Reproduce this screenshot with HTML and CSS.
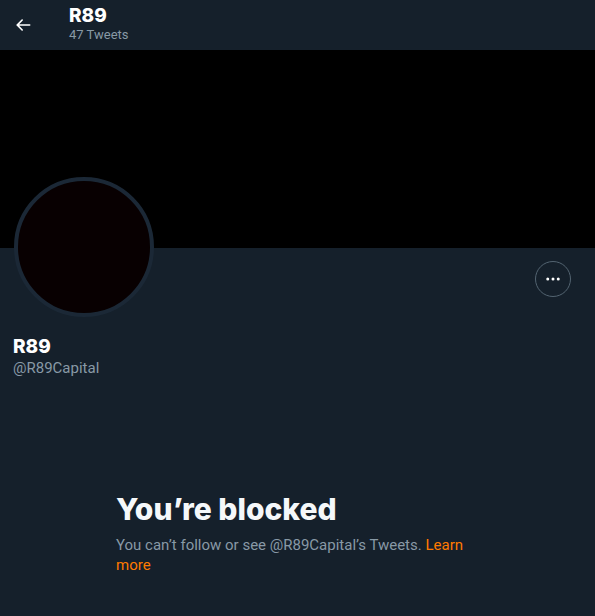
FILE: index.html
```html
<!DOCTYPE html>
<html>
<head>
<meta charset="utf-8">
<link rel="stylesheet" href="styles.css">
</head>
<body>
<div class="page">
  <header class="topbar">
    <div class="back">
      <svg viewBox="0 0 24 24" width="20" height="20"><path fill="#fff" d="M20 11H7.414l4.293-4.293a1 1 0 0 0-1.414-1.414l-6 6a1 1 0 0 0 0 1.414l6 6a1 1 0 0 0 1.414-1.414L7.414 13H20a1 1 0 1 0 0-2z"/></svg>
    </div>
    <div class="titles">
      <div class="title">R89</div>
      <div class="subtitle">47 Tweets</div>
    </div>
  </header>
  <div class="banner"></div>
  <div class="profile">
    <div class="avatar-row">
      <div class="avatar"></div>
      <button class="more" aria-label="More">
        <svg viewBox="0 0 24 24" width="20" height="20"><circle cx="5" cy="12" r="2" fill="#fff"/><circle cx="12" cy="12" r="2" fill="#fff"/><circle cx="19" cy="12" r="2" fill="#fff"/></svg>
      </button>
    </div>
    <div class="name">R89</div>
    <div class="handle">@R89Capital</div>
  </div>
  <section class="blocked">
    <h2 class="blocked-title">You’re blocked</h2>
    <p class="blocked-text">You can’t follow or see @R89Capital’s Tweets. <a class="link" href="#">Learn more</a></p>
  </section>
</div>
</body>
</html>
```

FILE: styles.css
```css
html, body {
  margin: 0;
  padding: 0;
  background: #15202b;
}
body {
  font-family: Roboto, "Noto Sans", sans-serif;
  color: #fff;
  width: 595px;
  height: 616px;
  overflow: hidden;
}
.page {
  display: flex;
  flex-direction: column;
}
.topbar {
  height: 50px;
  display: flex;
  align-items: center;
  padding-left: 13px;
  box-sizing: border-box;
}
.back {
  width: 20px;
  height: 20px;
  display: flex;
  margin-right: 36px;
}
.titles {
  display: flex;
  flex-direction: column;
}
.title {
  font-family: Inter, sans-serif;
  font-size: 19px;
  font-weight: 800;
  line-height: 23px;
  margin-top: -4px;
}
.subtitle {
  font-size: 13px;
  color: #8899a6;
  line-height: 16px;
}
.banner {
  height: 198px;
  background: #000;
}
.profile {
  padding: 0 14px;
  display: flex;
  flex-direction: column;
}
.avatar-row {
  display: flex;
  justify-content: space-between;
  align-items: flex-start;
  height: 82px;
}
.avatar {
  width: 132px;
  height: 132px;
  border-radius: 50%;
  background: #080001;
  border: 4px solid #1b2836;
  margin-top: -71px;
}
.more {
  width: 36px;
  height: 36px;
  border-radius: 50%;
  border: 1px solid #536471;
  background: transparent;
  display: flex;
  align-items: center;
  justify-content: center;
  padding: 0;
  margin-top: 13px;
  margin-right: 10px;
  box-sizing: border-box;
}
.more svg { width: 18px; height: 18px; }
.name {
  font-family: Inter, sans-serif;
  font-size: 19px;
  font-weight: 800;
  line-height: 23px;
  margin-top: 5px;
  margin-left: -1px;
}
.handle {
  font-size: 15px;
  color: #8899a6;
  line-height: 20px;
  margin-left: -1px;
}
.blocked {
  width: 363px;
  margin: 113px auto 0 116px;
}
.blocked-title {
  margin: 0;
  font-family: Inter, sans-serif;
  font-size: 30px;
  font-weight: 800;
  line-height: 36px;
  color: #f5f8fa;
}
.blocked-text {
  margin: 8px 0 0;
  font-size: 15px;
  line-height: 20px;
  color: #8899a6;
}
.link {
  color: #ff7a00;
  text-decoration: none;
}
```
